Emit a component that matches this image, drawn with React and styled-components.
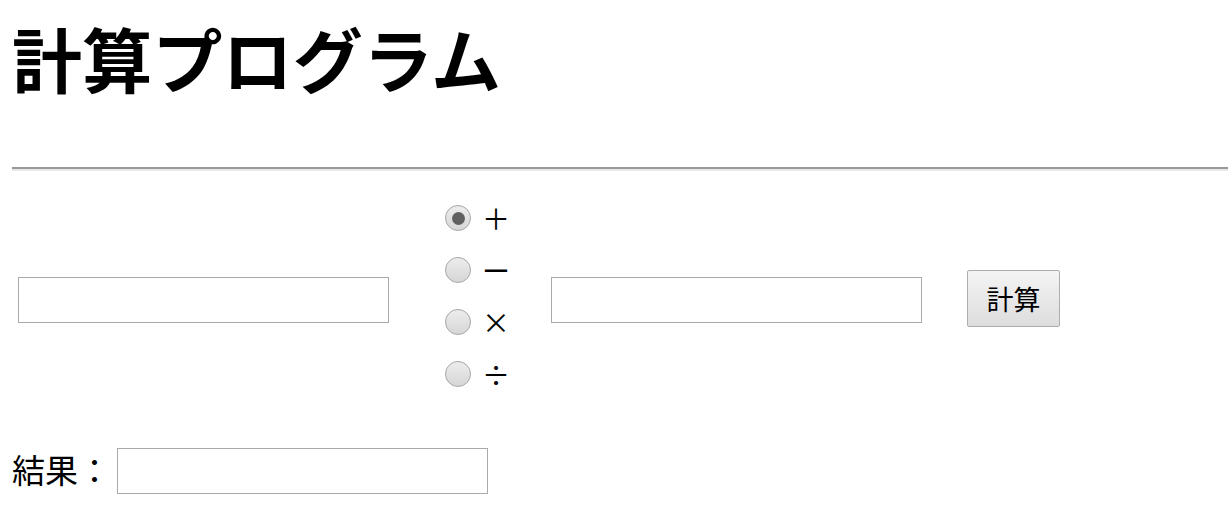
import React, { useState } from "react";
import styled, { createGlobalStyle } from "styled-components";

const GlobalStyle = createGlobalStyle`
    body {
        margin: 0;
        background: #FFFFFF;
        font-family: "Noto Sans CJK JP", "Noto Sans", sans-serif;
        color: #000000;
    }
`;

const Page = styled.div`
    padding-left: 12px;
`;

const Title = styled.h1`
    margin: 0;
    padding-top: 23px;
    font-size: 70px;
    line-height: 70px;
    font-weight: 700;
    letter-spacing: 0.2px;
`;

const Rule = styled.hr`
    margin: 74px 0 0 0;
    height: 0;
    border: none;
    border-top: 2px solid #999999;
    border-bottom: 2px solid #E8E8E8;
`;

const CalcRow = styled.div`
    display: flex;
    align-items: center;
    margin-top: 34px;
    padding-left: 6px;
`;

const NumberField = styled.input`
    box-sizing: border-box;
    width: 371px;
    height: 46px;
    margin-top: ${props => props.$shift || 0}px;
    border: 1px solid #A9A9A9;
    padding: 2px 6px;
    font-size: 24px;
    font-family: inherit;
    outline: none;
`;

const OperatorList = styled.div`
    display: flex;
    flex-direction: column;
    gap: 26px;
    margin: 0 41px 0 56px;
`;

const OperatorOption = styled.label`
    display: flex;
    align-items: center;
    height: 26px;
    font-size: 28px;
    line-height: 26px;
    cursor: pointer;
`;

const Radio = styled.input`
    appearance: none;
    box-sizing: border-box;
    width: 26px;
    height: 26px;
    margin: 0 11px 0 0;
    border-radius: 50%;
    border: 1px solid #A6A6A6;
    background: linear-gradient(#EDEDED, #D6D6D6);
    display: grid;
    place-items: center;
    cursor: pointer;

    &:checked::after {
        content: "";
        width: 13px;
        height: 13px;
        border-radius: 50%;
        background: #606060;
    }
`;

const CalcButton = styled.button`
    box-sizing: border-box;
    width: 93px;
    height: 57px;
    margin-left: 45px;
    margin-top: 4px;
    border: 1px solid #ADADAD;
    border-radius: 2px;
    background: linear-gradient(#F4F4F4, #DDDDDD);
    font-family: inherit;
    font-size: 27px;
    color: #000000;
    cursor: pointer;
`;

const ResultRow = styled.div`
    display: flex;
    align-items: center;
    margin-top: 61px;
`;

const ResultLabel = styled.span`
    font-size: 33px;
    line-height: 1;
    margin-right: 6px;
    margin-top: -4px;
`;

const operators = [
    { value: "add", label: "＋", fn: (a, b) => a + b },
    { value: "sub", label: "ー", fn: (a, b) => a - b },
    { value: "mul", label: "×", fn: (a, b) => a * b },
    { value: "div", label: "÷", fn: (a, b) => a / b },
];

export default function App() {
    const [left, setLeft] = useState("");
    const [right, setRight] = useState("");
    const [op, setOp] = useState("add");
    const [result, setResult] = useState("");

    const calculate = () => {
        const found = operators.find(o => o.value === op);
        const value = found.fn(Number(left), Number(right));
        setResult(String(value));
    };

    return (
        <Page>
            <GlobalStyle />
            <Title>計算プログラム</Title>
            <Rule />
            <CalcRow>
                <NumberField $shift={8} value={left} onChange={e => setLeft(e.target.value)} />
                <OperatorList>
                    {operators.map(o => (
                        <OperatorOption key={o.value}>
                            <Radio
                                type="radio"
                                name="op"
                                value={o.value}
                                checked={op === o.value}
                                onChange={() => setOp(o.value)}
                            />
                            {o.label}
                        </OperatorOption>
                    ))}
                </OperatorList>
                <NumberField $shift={8} value={right} onChange={e => setRight(e.target.value)} />
                <CalcButton onClick={calculate}>計算</CalcButton>
            </CalcRow>
            <ResultRow>
                <ResultLabel>結果：</ResultLabel>
                <NumberField readOnly value={result} />
            </ResultRow>
        </Page>
    );
}
